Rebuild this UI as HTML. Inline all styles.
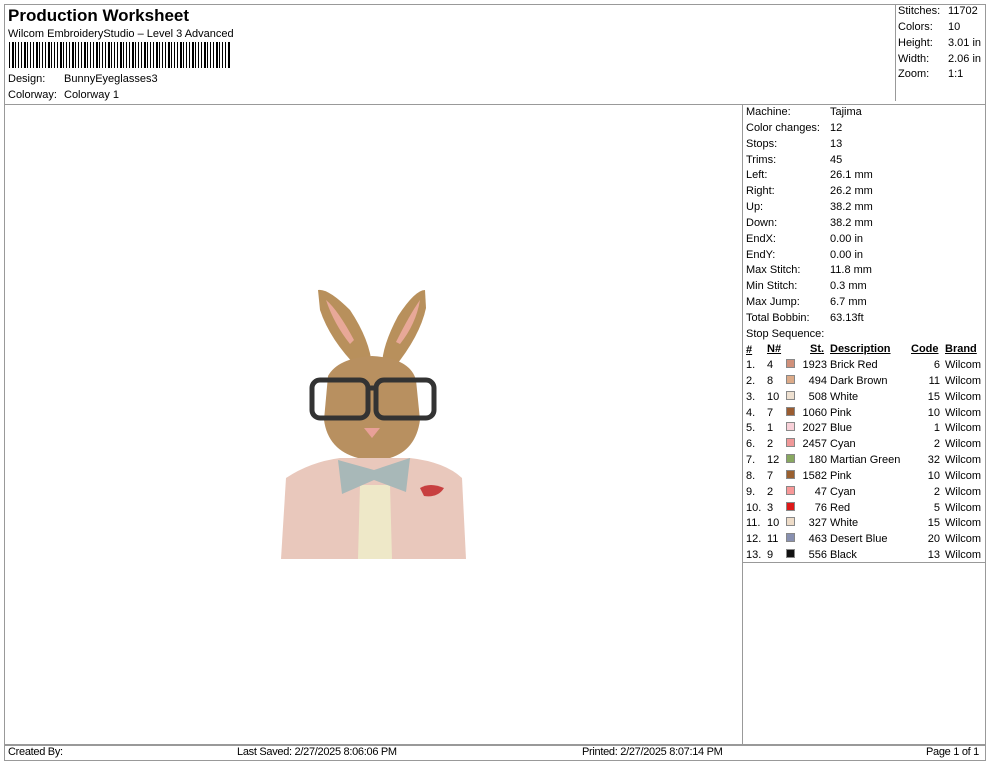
<!DOCTYPE html>
<html><head><meta charset="utf-8"><style>
*{margin:0;padding:0;box-sizing:border-box}
body{width:990px;height:762px;background:#fff;font-family:"Liberation Sans",sans-serif;font-size:11px;color:#000;position:relative;overflow:hidden}
.a{position:absolute;white-space:nowrap;line-height:13px}
.l{position:absolute;background:#999}
.n{font-family:"Liberation Sans Narrow","Liberation Sans",sans-serif;letter-spacing:-0.3px}
u{text-decoration:underline}
.sw{position:absolute;width:9px;height:9px;border:1px solid #888}
</style></head><body>
<div class="l" style="left:4px;top:4px;width:982px;height:1px"></div>
<div class="l" style="left:4px;top:4px;width:1px;height:757px"></div>
<div class="l" style="left:985px;top:4px;width:1px;height:757px"></div>
<div class="l" style="left:4px;top:104px;width:982px;height:1px"></div>
<div class="l" style="left:895px;top:4px;width:1px;height:97px"></div>
<div class="l" style="left:742px;top:104px;width:1px;height:640px"></div>
<div class="l" style="left:742px;top:562px;width:244px;height:1px"></div>
<div class="l" style="left:4px;top:744px;width:982px;height:2px"></div>
<div class="l" style="left:4px;top:760px;width:982px;height:1px"></div>

<div class="a" style="left:8px;top:6px;font-size:17px;font-weight:bold;line-height:20px">Production Worksheet</div>
<div class="a" style="left:8px;top:28px">Wilcom EmbroideryStudio – Level 3 Advanced</div>
<div style="position:absolute;left:9px;top:42px;width:221px;height:26px;background:repeating-linear-gradient(90deg,#000 0 1px,#fff 1px 3px,#000 3px 5px,#fff 5px 6px,#000 6px 7px,#fff 7px 9px,#000 9px 10px,#fff 10px 12px)"></div>
<div class="a" style="left:8px;top:73px">Design:</div><div class="a" style="left:64px;top:73px">BunnyEyeglasses3</div>
<div class="a" style="left:8px;top:89px">Colorway:</div><div class="a" style="left:64px;top:89px">Colorway 1</div>

<div class="a" style="left:898px;top:5px">Stitches:</div><div class="a" style="left:948px;top:5px">11702</div>
<div class="a" style="left:898px;top:21px">Colors:</div><div class="a" style="left:948px;top:21px">10</div>
<div class="a" style="left:898px;top:37px">Height:</div><div class="a" style="left:948px;top:37px">3.01 in</div>
<div class="a" style="left:898px;top:53px">Width:</div><div class="a" style="left:948px;top:53px">2.06 in</div>
<div class="a" style="left:898px;top:68px">Zoom:</div><div class="a" style="left:948px;top:68px">1:1</div>

<div class="a" style="left:746px;top:105px;line-height:15.85px">Machine:<br>Color changes:<br>Stops:<br>Trims:<br>Left:<br>Right:<br>Up:<br>Down:<br>EndX:<br>EndY:<br>Max Stitch:<br>Min Stitch:<br>Max Jump:<br>Total Bobbin:<br>Stop Sequence:</div>
<div class="a" style="left:830px;top:105px;line-height:15.85px">Tajima<br>12<br>13<br>45<br>26.1 mm<br>26.2 mm<br>38.2 mm<br>38.2 mm<br>0.00 in<br>0.00 in<br>11.8 mm<br>0.3 mm<br>6.7 mm<br>63.13ft</div>

<div class="a" style="left:746px;top:343px;line-height:15.85px;font-weight:bold"><u>#</u></div>
<div class="a" style="left:767px;top:343px;font-weight:bold"><u>N#</u></div>
<div class="a" style="left:810px;top:343px;font-weight:bold"><u>St.</u></div>
<div class="a" style="left:830px;top:343px;font-weight:bold"><u>Description</u></div>
<div class="a" style="left:911px;top:343px;font-weight:bold"><u>Code</u></div>
<div class="a" style="left:945px;top:343px;font-weight:bold"><u>Brand</u></div>
<div class="a" style="left:746px;top:358px;line-height:15.85px">1.<br>2.<br>3.<br>4.<br>5.<br>6.<br>7.<br>8.<br>9.<br>10.<br>11.<br>12.<br>13.</div>
<div class="a" style="left:767px;top:358px;line-height:15.85px">4<br>8<br>10<br>7<br>1<br>2<br>12<br>7<br>2<br>3<br>10<br>11<br>9</div>
<div class="a" style="left:795px;top:358px;width:32px;text-align:right;line-height:15.85px">1923<br>494<br>508<br>1060<br>2027<br>2457<br>180<br>1582<br>47<br>76<br>327<br>463<br>556</div>
<div class="a" style="left:830px;top:358px;line-height:15.85px">Brick Red<br>Dark Brown<br>White<br>Pink<br>Blue<br>Cyan<br>Martian Green<br>Pink<br>Cyan<br>Red<br>White<br>Desert Blue<br>Black</div>
<div class="a" style="left:900px;top:358px;width:40px;text-align:right;line-height:15.85px">6<br>11<br>15<br>10<br>1<br>2<br>32<br>10<br>2<br>5<br>15<br>20<br>13</div>
<div class="a" style="left:945px;top:358px;line-height:15.85px">Wilcom<br>Wilcom<br>Wilcom<br>Wilcom<br>Wilcom<br>Wilcom<br>Wilcom<br>Wilcom<br>Wilcom<br>Wilcom<br>Wilcom<br>Wilcom<br>Wilcom</div>
<div class="sw" style="left:786px;top:359px;background:#d0907a"></div>
<div class="sw" style="left:786px;top:375px;background:#dcaa88"></div>
<div class="sw" style="left:786px;top:391px;background:#eee0d0"></div>
<div class="sw" style="left:786px;top:407px;background:#9a5c30"></div>
<div class="sw" style="left:786px;top:422px;background:#f8d0d8"></div>
<div class="sw" style="left:786px;top:438px;background:#f09898"></div>
<div class="sw" style="left:786px;top:454px;background:#88a860"></div>
<div class="sw" style="left:786px;top:470px;background:#9a6030"></div>
<div class="sw" style="left:786px;top:486px;background:#f89898"></div>
<div class="sw" style="left:786px;top:502px;background:#dd1818"></div>
<div class="sw" style="left:786px;top:517px;background:#eedcc8"></div>
<div class="sw" style="left:786px;top:533px;background:#8890b0"></div>
<div class="sw" style="left:786px;top:549px;background:#111"></div>

<div class="a n" style="left:8px;top:746px;font-size:11px">Created By:</div>
<div class="a n" style="left:237px;top:746px;font-size:11px">Last Saved: 2/27/2025 8:06:06 PM</div>
<div class="a n" style="left:582px;top:746px;font-size:11px">Printed: 2/27/2025 8:07:14 PM</div>
<div class="a n" style="left:926px;top:746px;font-size:11px">Page 1 of 1</div>

<svg style="position:absolute;left:270px;top:280px" width="210" height="290" viewBox="0 0 210 290">
<path d="M11 279 L16 198 Q40 182 70 178 L140 178 Q175 182 192 198 L196 279 Z" fill="#e9c8bc"/>
<path d="M90 205 L120 205 L122 279 L88 279 Z" fill="#eee8c8"/>
<path d="M68 180 L104 190 L140 178 L136 212 L104 200 L72 214 Z" fill="#a8b8b8"/>
<path d="M150 208 q10-6 24 0 q-6 10-20 8z" fill="#c84040"/>
<path d="M48 10 Q58 8 80 30 Q100 60 102 86 L88 88 Q60 60 50 30 Z" fill="#b8905c"/>
<path d="M155 10 Q145 10 128 36 Q112 66 112 86 L124 88 Q150 56 156 28 Z" fill="#b8905c"/>
<path d="M56 20 Q68 30 84 60 L80 64 Q64 44 56 20Z M150 20 Q140 34 126 62 L130 64 Q146 44 150 20Z" fill="#e8a898"/>
<path d="M58 96 Q68 78 102 76 Q140 78 146 100 L150 140 Q146 170 120 178 L88 178 Q58 170 54 140 Z" fill="#b89060"/>
<path d="M94 148 h16 l-8 10z" fill="#e8a098"/>
<rect x="42" y="100" width="56" height="38" rx="8" fill="none" stroke="#333" stroke-width="5"/>
<rect x="106" y="100" width="58" height="38" rx="8" fill="none" stroke="#333" stroke-width="5"/>
<path d="M96 108 h12" stroke="#333" stroke-width="5"/>
</svg>
</body></html>
